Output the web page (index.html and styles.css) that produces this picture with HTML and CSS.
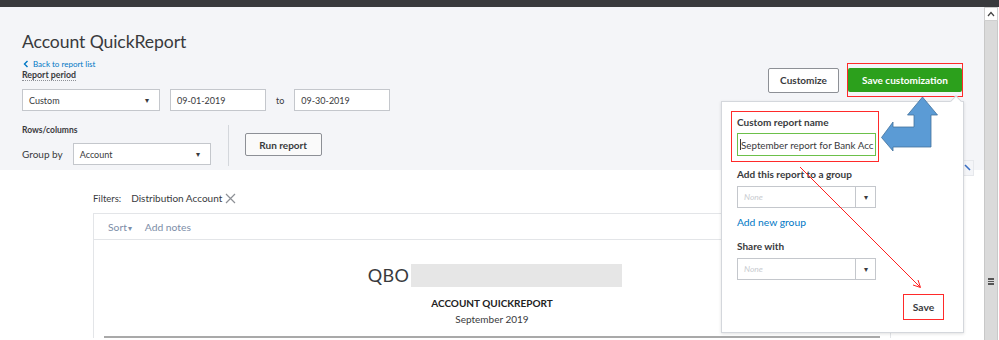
FILE: index.html
```html
<!DOCTYPE html>
<html>
<head>
<meta charset="utf-8">
<link rel="stylesheet" href="styles.css">
</head>
<body>
<div class="topbar"></div>
<div class="page">
  <div class="main">
    <div class="header">
      <div class="hleft">
        <h1 class="title">Account QuickReport</h1>
        <a class="back"><svg class="chev" width="6" height="8" viewBox="0 0 6 8"><path d="M4.5 1 L1.5 4 L4.5 7" fill="none" stroke="#0077c5" stroke-width="1.4"/></svg>Back to report list</a>
        <div class="period"><span>Report period</span></div>
        <div class="row1">
          <div class="sel w138"><span>Custom</span><span class="caret">&#9662;</span></div>
          <div class="inp w96">09-01-2019</div>
          <span class="to">to</span>
          <div class="inp w96">09-30-2019</div>
        </div>
        <div class="row2">
          <div class="rows">
            <div class="rlabel">Rows/columns</div>
            <div class="grp">
              <span class="gl">Group by</span>
              <div class="sel w138"><span>Account</span><span class="caret">&#9662;</span></div>
            </div>
          </div>
          <div class="vdiv"></div>
          <button class="run">Run report</button>
        </div>
      </div>
      <div class="hright">
        <button class="cust">Customize</button>
        <div class="redwrap"><button class="savec">Save customization</button></div>
      </div>
      <div class="collapse"><svg width="8" height="8" viewBox="0 0 8 8"><path d="M1 1 L6 6" stroke="#3b6fc4" stroke-width="1.6"/></svg></div>
    </div>
    <div class="content">
      <div class="filters"><span class="fl">Filters:</span><span class="fv">Distribution Account</span><svg class="x" width="11" height="11" viewBox="0 0 11 11"><path d="M1 1 L10 10 M10 1 L1 10" stroke="#8d9096" stroke-width="1.2"/></svg></div>
      <div class="panel">
        <div class="toolbar"><span class="tb">Sort<span class="tcaret">&#9662;</span></span><span class="tb">Add notes</span></div>
        <div class="rbody">
          <div class="qrow"><span class="qbo">QBO</span><span class="redact"></span></div>
          <div class="rtitle">ACCOUNT QUICKREPORT</div>
          <div class="rdate">September 2019</div>
          <div class="thick"></div>
        </div>
      </div>
    </div>
  </div>
  <div class="scrollbar">
    <div class="sbup"><svg width="8" height="6" viewBox="0 0 8 6"><path d="M1 5 L4 1.5 L7 5" fill="none" stroke="#444" stroke-width="1.2"/></svg></div>
    <div class="sbtrack"><div class="grip"><i></i><i></i><i></i></div></div>
  </div>
</div>

<div class="popup">
  <div class="notch"></div>
  <div class="redbox">
    <div class="plabel">Custom report name</div>
    <div class="ginput"><span class="cursor"></span><span class="gtext">September report for Bank Acc</span></div>
  </div>
  <div class="plabel mt1">Add this report to a group</div>
  <div class="psel"><span class="ph">None</span><span class="pbtn">&#9662;</span></div>
  <a class="addgrp">Add new group</a>
  <div class="plabel mt2">Share with</div>
  <div class="psel"><span class="ph">None</span><span class="pbtn">&#9662;</span></div>
  <div class="psave"><button class="save">Save</button></div>
</div>

<svg class="overlay" width="999" height="340" viewBox="0 0 999 340">
  <polygon points="922.5,97 937.5,115 931,115 931,147 893,147 893,151 881.5,137.5 893,122 893,127 914,127 914,115 907.5,115" fill="#5b9bd5" stroke="#41719c" stroke-width="0.8"/>
  <line x1="800" y1="167" x2="920" y2="287" stroke="#ff2020" stroke-width="1"/>
  <path d="M913 285 L920.5 287.5 L918 280" fill="none" stroke="#ff2020" stroke-width="1"/>
</svg>
</body>
</html>
```
FILE: styles.css
```css
* { box-sizing: border-box; }
body {
  margin: 0;
  font-family: "Lato", "Open Sans", sans-serif;
  color: #393a3d;
  background: #fff;
  width: 999px;
  height: 340px;
  overflow: hidden;
  position: relative;
}
.topbar { height: 7px; background: #393a3d; }
.page { display: flex; height: 333px; }
.main { flex: 1; display: flex; flex-direction: column; }
.header {
  height: 163px;
  background: #f4f5f8;
  display: flex;
  justify-content: space-between;
  padding: 0 21px 0 22px;
  position: relative;
}
.hleft { padding-top: 23px; display: flex; flex-direction: column; align-items: flex-start; }
.title { margin: 0; font-size: 17.6px; font-weight: 400; line-height: 24px; letter-spacing: -0.1px; }
.back { margin-top: 5px; font-size: 8px; line-height: 10px; color: #0077c5; display: flex; align-items: center; gap: 4px; }
.chev { margin-left: 1px; }
.period { font-size: 8.8px; font-weight: 700; line-height: 12px; }
.period span { border-bottom: 1px dotted #8d9096; }
.row1 { margin-top: 8px; display: flex; align-items: center; gap: 10px; }
.sel, .inp {
  height: 22px;
  background: #fff;
  border: 1px solid #c4c7cc;
  font-size: 9px;
  display: flex;
  align-items: center;
  padding: 0 6px;
}
.sel { justify-content: space-between; }
.caret { font-size: 8px; color: #393a3d; margin-right: 4px; }
.w138 { width: 138px; }
.w96 { width: 96px; }
.to { font-size: 9px; }
.row2 { margin-top: 14px; display: flex; align-items: flex-start; }
.rows { display: flex; flex-direction: column; }
.rlabel { font-size: 8.5px; font-weight: 700; line-height: 10px; }
.grp { margin-top: 8px; display: flex; align-items: center; gap: 10px; }
.gl { font-size: 10px; }
.vdiv { width: 1px; height: 41px; background: #d4d7dc; margin-left: 17px; }
.run {
  margin-left: 16px;
  margin-top: 8px;
  width: 77px;
  height: 23px;
  border: 1px solid #8d9096;
  border-radius: 2px;
  background: #fafafa;
  font-family: inherit;
  font-size: 10px;
  font-weight: 700;
  color: #393a3d;
  padding: 0;
}
.hright { padding-top: 56px; display: flex; align-items: center; gap: 8px; height: 90px; }
.cust {
  width: 71px; height: 25px;
  border: 1px solid #8d9096;
  border-radius: 2px;
  background: #fff;
  font-family: inherit;
  font-size: 10px;
  font-weight: 700;
  color: #393a3d;
  padding: 0;
}
.redwrap { border: 1px solid #ff2a2a; padding: 4px 0 4px 0; }
.savec {
  display: block;
  width: 114px; height: 24px;
  margin: 0;
  border: 0;
  border-radius: 2px;
  background: #2ca01c;
  color: #fff;
  font-family: inherit;
  font-size: 10px;
  font-weight: 700;
  padding: 0;
}
.collapse {
  position: absolute;
  right: 10px; bottom: -6px;
  width: 12px; height: 16px;
  border: 1px solid #e6e8ec;
  background: #f4f5f8;
  display: flex; align-items: center; justify-content: center;
}
.content { flex: 1; padding-left: 93px; }
.filters { margin-top: 22px; height: 12px; display: flex; align-items: center; font-size: 9.5px; }
.fl { margin-right: 10px; }
.fv { font-size: 10px; margin-right: 2px; }
.x { margin-left: 1px; }
.panel { margin-top: 9px; width: 798px; border: 1px solid #e3e5e8; border-bottom: 0; }
.toolbar { height: 26px; border-bottom: 1px solid #e3e5e8; display: flex; align-items: center; padding-left: 14px; gap: 13px; }
.tb { font-size: 10.3px; color: #7d8ea8; }
.tcaret { font-size: 8px; margin-left: 1px; }
.rbody { padding-top: 24px; display: flex; flex-direction: column; align-items: center; }
.qrow { display: flex; align-items: center; margin-left: 6px; }
.qbo { font-size: 18px; font-weight: 400; line-height: 23px; margin-right: 2px; letter-spacing: 0.4px; }
.redact { width: 211px; height: 23px; background: #e6e6e6; }
.rtitle { margin-top: 9px; font-size: 10px; font-weight: 700; line-height: 14px; color: #222; }
.rdate { font-size: 10px; line-height: 14px; margin-top: 2px; }
.thick { align-self: stretch; margin: 10px 10px 0 10px; height: 2px; background: #a9a9a9; }
.scrollbar { width: 14px; margin-right: 1px; display: flex; flex-direction: column; }
.sbup { height: 14px; background: #fff; border: 1px solid #cfcfcf; display: flex; align-items: center; justify-content: center; }
.sbtrack { flex: 1; background: #dadada; border-left: 1px solid #c8c8c8; border-right: 1px solid #c8c8c8; display: flex; justify-content: center; }
.grip { margin-top: 257px; display: flex; flex-direction: column; gap: 1px; }
.grip i { display: block; width: 6px; height: 1.5px; background: #555; }

.popup {
  position: absolute;
  left: 721px; top: 101px;
  width: 243px; height: 232px;
  background: #fff;
  border: 1px solid #d4d7dc;
  box-shadow: 0 1px 3px rgba(0,0,0,0.12);
  padding: 9px 0 0 9px;
}
.notch {
  position: absolute;
  right: 3px; top: -5px;
  width: 8px; height: 8px;
  background: #fff;
  border-left: 1px solid #d4d7dc;
  border-top: 1px solid #d4d7dc;
  transform: rotate(45deg);
}
.redbox { width: 148px; height: 51px; border: 1px solid #ff2a2a; padding: 4px 0 0 5px; }
.plabel { font-size: 10px; font-weight: 700; line-height: 13px; }
.ginput {
  margin-top: 4px;
  width: 139px; height: 23px;
  border: 1px solid #6cc04a;
  font-size: 9.8px;
  display: flex; align-items: center;
  padding-left: 2px;
  white-space: nowrap;
  overflow: hidden;
  color: #393a3d;
}
.gtext { flex: 1; min-width: 0; overflow: hidden; }
.cursor { display: inline-block; flex: none; width: 1px; height: 11px; background: #393a3d; }
.mt1 { margin-top: 6px; margin-left: 6px; }
.mt2 { margin-top: 12px; margin-left: 6px; }
.psel {
  margin-left: 6px;
  margin-top: 5px;
  width: 139px; height: 22px;
  border: 1px solid #c4c7cc;
  display: flex; justify-content: space-between; align-items: stretch;
}
.ph { font-size: 8.5px; font-style: italic; color: #c8cbd0; display: flex; align-items: center; padding-left: 6px; }
.pbtn { width: 20px; border-left: 1px solid #c4c7cc; font-size: 8px; display: flex; align-items: center; justify-content: center; color: #393a3d; }
.addgrp { display: block; margin-left: 6px; margin-top: 8px; font-size: 10.3px; line-height: 12px; color: #0077c5; }
.psave { display: flex; justify-content: flex-end; padding-right: 19px; margin-top: 14px; }
.save {
  width: 41px; height: 26px;
  border: 1px solid #ff2a2a;
  background: #fff;
  font-family: inherit;
  font-size: 10.3px;
  font-weight: 700;
  color: #393a3d;
  padding: 0;
}
.overlay { position: absolute; left: 0; top: 0; pointer-events: none; }
```
